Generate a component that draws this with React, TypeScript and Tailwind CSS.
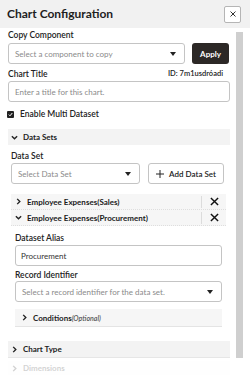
import React from "react";

function Caret() {
  return (
    <svg width="6" height="4" viewBox="0 0 6 4" className="shrink-0">
      <path d="M0 0h6L3 4z" fill="#222" />
    </svg>
  );
}

function Chevron({ open }: { open?: boolean }) {
  return (
    <svg width="7" height="7" viewBox="0 0 8 8" className="shrink-0">
      {open ? (
        <path d="M1 2.5l3 3 3-3" fill="none" stroke="#222" strokeWidth="1.6" />
      ) : (
        <path d="M2.5 1l3 3-3 3" fill="none" stroke="#222" strokeWidth="1.6" />
      )}
    </svg>
  );
}

function Cross() {
  return (
    <svg width="9" height="9" viewBox="0 0 10 10">
      <path d="M1 1l8 8M9 1l-8 8" stroke="#111" strokeWidth="1.6" />
    </svg>
  );
}

function Select({ placeholder, className }: { placeholder: string; className: string }) {
  return (
    <div
      className={`h-[21px] border border-[#c4c4c4] rounded-[3px] bg-white flex items-center justify-between pl-[6px] pr-[8px] ${className}`}
    >
      <span className="text-[8px] text-[#8a8a8a] truncate">{placeholder}</span>
      <Caret />
    </div>
  );
}

function DatasetRow({ name, open }: { name: string; open?: boolean }) {
  return (
    <div className="h-[16px] bg-[#f6f6f6] border-b border-dotted border-[#dedede] flex items-center">
      <div className="flex-1 flex items-center gap-[5px] pl-[4px]">
        <Chevron open={open} />
        <span className="text-[8px] font-bold text-[#1a1a1a]">{name}</span>
      </div>
      <div className="w-px h-[12px] bg-[#dcdcdc]" />
      <div className="w-[24px] flex items-center justify-center">
        <Cross />
      </div>
    </div>
  );
}

export default function App() {
  return (
    <div className="w-[250px] h-[375px] overflow-hidden bg-white font-['Lato',sans-serif] text-[#222] relative">
      {/* Header */}
      <div className="h-[28px] bg-[#f1f1f1] flex items-center justify-between pl-[7px] pr-[9px]">
        <h1 className="text-[12px] font-bold text-[#1e1e1e]">Chart Configuration</h1>
        <button className="w-[17px] h-[17px] border border-[#b5b5b5] rounded-[2px] bg-white flex items-center justify-center">
          <svg width="6" height="6" viewBox="0 0 6 6">
            <path d="M0.5 0.5l5 5M5.5 0.5l-5 5" stroke="#333" strokeWidth="1" />
          </svg>
        </button>
      </div>

      <div className="flex pl-[8px]">
        <div className="w-[222px]">
          <div className="mt-[1px] h-[13px] text-[8.5px] font-semibold leading-[13px]">Copy Component</div>
          <div className="mt-[1px] flex gap-[7px]">
            <Select placeholder="Select a component to copy" className="w-[177px]" />
            <button className="w-[37px] h-[21px] rounded-[3px] bg-[#2c2826] text-white text-[8px] font-bold">
              Apply
            </button>
          </div>

          <div className="mt-[4px] h-[12px] flex justify-between items-center pr-[7px]">
            <span className="text-[8.5px] font-semibold">Chart Title</span>
            <span className="text-[7.5px] font-semibold">ID: 7m1usdróadi</span>
          </div>
          <div className="mt-[1px] h-[21px] border border-[#c4c4c4] rounded-[3px] flex items-center pl-[6px]">
            <span className="text-[8px] text-[#8a8a8a]">Enter a title for this chart.</span>
          </div>

          <label className="mt-[6px] h-[12px] flex items-center gap-[6px] -ml-[1px]">
            <span className="w-[7px] h-[7px] bg-[#222] rounded-[1px] flex items-center justify-center">
              <svg width="5" height="5" viewBox="0 0 5 5">
                <path d="M0.8 2.6l1.2 1.2L4.3 1" fill="none" stroke="#fff" strokeWidth="1" />
              </svg>
            </span>
            <span className="text-[8.5px] font-semibold">Enable Multi Dataset</span>
          </label>

          {/* Data Sets */}
          <div className="mt-[9px] h-[16px] bg-[#f3f3f3] flex items-center gap-[5px] pl-[3px]">
            <Chevron open />
            <span className="text-[8px] font-bold">Data Sets</span>
          </div>

          <div className="pl-[3px] pr-[4px]">
            <div className="mt-[5px] h-[12px] text-[8.5px] font-semibold leading-[12px]">Data Set</div>
            <div className="mt-[1px] flex gap-[8px]">
              <Select placeholder="Select Data Set" className="w-[129px]" />
              <button className="w-[76px] h-[21px] border border-[#c4c4c4] rounded-[3px] bg-white flex items-center justify-center gap-[5px]">
                <svg width="8" height="8" viewBox="0 0 8 8">
                  <path d="M4 0v8M0 4h8" stroke="#222" strokeWidth="1" />
                </svg>
                <span className="text-[8px] font-semibold">Add Data Set</span>
              </button>
            </div>

            <div className="mt-[10px]">
              <DatasetRow name="Employee Expenses(Sales)" />
              <DatasetRow name="Employee Expenses(Procurement)" open />
            </div>

            <div className="pl-[4px] pr-[4px]">
              <div className="mt-[6px] h-[12px] text-[8.5px] font-semibold leading-[12px]">Dataset Alias</div>
              <div className="mt-[1px] h-[21px] border border-[#c4c4c4] rounded-[3px] flex items-center pl-[5px]">
                <span className="text-[8px] text-[#333]">Procurement</span>
              </div>
              <div className="mt-[3px] h-[12px] text-[8.5px] font-semibold leading-[12px]">Record Identifier</div>
              <Select placeholder="Select a record identifier for the data set." className="w-full" />
              <div className="mt-[7px] h-[18px] bg-[#f6f6f6] border-b border-[#e4e4e4] flex items-center gap-[5px] pl-[6px]">
                <Chevron />
                <span className="text-[8px] font-bold">
                  Conditions<span className="text-[7px] italic font-semibold text-[#555]">(Optional)</span>
                </span>
              </div>
            </div>
          </div>

          <div className="mt-[14px] h-[17px] bg-[#f3f3f3] border-b border-[#e6e6e6] flex items-center gap-[5px] pl-[3px]">
            <Chevron />
            <span className="text-[8px] font-bold">Chart Type</span>
          </div>
          <div className="mt-[3px] h-[14px] bg-[#fbfbfb] flex items-center gap-[5px] pl-[3px] opacity-20">
            <Chevron />
            <span className="text-[8px] font-bold">Dimensions</span>
          </div>
        </div>

        {/* Scrollbar */}
        <div className="ml-[6px] mt-[4px] w-[7px] h-[326px] bg-[#cfcfcf]" />
      </div>
    </div>
  );
}
